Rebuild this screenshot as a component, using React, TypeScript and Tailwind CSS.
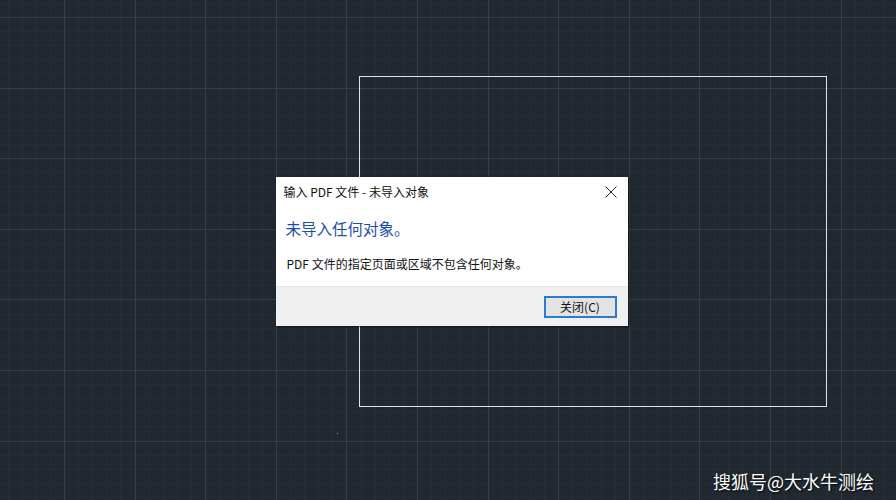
import React from "react";

const W = 896;
const H = 500;
const STEP = 70.6;
const OX = 64;
const OY = 17;

function gridLines(origin: number, size: number) {
    const major: number[] = [];
    const minor: number[] = [];
    const first = origin - Math.ceil(origin / STEP) * STEP;
    for (let m = first; m < size + STEP; m += STEP) {
        if (m >= 0 && m <= size) major.push(Math.round(m) + 0.5);
        for (let i = 1; i < 5; i++) {
            const v = m + (STEP / 5) * i;
            if (v >= 0 && v <= size) minor.push(Math.round(v) + 0.5);
        }
    }
    return { major, minor };
}

function CadCanvas() {
    const xs = gridLines(OX, W);
    const ys = gridLines(OY, H);
    return (
        <svg className="absolute inset-0" width={W} height={H} viewBox={`0 0 ${W} ${H}`}>
            <rect width={W} height={H} fill="#212830" />
            {xs.minor.map((x, i) => (
                <line key={`vx${i}`} x1={x} y1={0} x2={x} y2={H} stroke="#262d36" strokeWidth={1} />
            ))}
            {ys.minor.map((y, i) => (
                <line key={`hy${i}`} x1={0} y1={y} x2={W} y2={y} stroke="#262d36" strokeWidth={1} />
            ))}
            {xs.major.map((x, i) => (
                <line key={`VX${i}`} x1={x} y1={0} x2={x} y2={H} stroke="#353d47" strokeWidth={1} />
            ))}
            {ys.major.map((y, i) => (
                <line key={`HY${i}`} x1={0} y1={y} x2={W} y2={y} stroke="#353d47" strokeWidth={1} />
            ))}
            {/* selection window */}
            <rect x={359.5} y={76.5} width={467} height={330} fill="none" stroke="#dfe2e6" strokeWidth={1} />
            <rect x={337} y={433} width={1} height={1} fill="#9aa0a8" />
        </svg>
    );
}

function CloseIcon() {
    return (
        <svg width="12" height="12" viewBox="0 0 12 12">
            <path d="M0.5 0.5 L11.5 11.5 M11.5 0.5 L0.5 11.5" stroke="#222" strokeWidth="1" fill="none" />
        </svg>
    );
}

export default function App() {
    return (
        <div
            className="relative w-[896px] h-[500px] overflow-hidden bg-[#212830]"
            style={{ fontFamily: '"Microsoft YaHei", "Noto Sans CJK SC", "Noto Sans", sans-serif' }}
        >
            <CadCanvas />

            <div className="relative flex h-full items-center justify-center pl-[7px] pt-[3px]">
                <div className="flex w-[352px] flex-col bg-white shadow-[1px_1px_2px_rgba(0,0,0,0.5)]">
                    <div className="flex h-[31px] items-center justify-between pl-[8px] pr-[11px]">
                        <span className="text-[12px] leading-none text-[#111]">输入 PDF 文件 - 未导入对象</span>
                        <CloseIcon />
                    </div>
                    <div className="pl-[10px] pt-[13px] text-[15.5px] leading-none text-[#1c4eab]">未导入任何对象。</div>
                    <div className="pl-[11px] pt-[22px] text-[12px] leading-none text-[#111]">
                        PDF 文件的指定页面或区域不包含任何对象。
                    </div>
                    <div className="mt-[16px] flex h-[40px] items-center justify-end border-t border-[#e6e6e6] bg-[#f0f0f0] pr-[11px]">
                        <button className="flex h-[22px] w-[73px] items-center justify-center border-2 border-[#2a7bd6] bg-[#e3e3e3] text-[12px] leading-none text-[#111]">
                            关闭(C)
                        </button>
                    </div>
                </div>
            </div>

            <div className="absolute bottom-[10px] right-[22px] text-[18px] leading-none text-white [text-shadow:1px_1px_2px_rgba(0,0,0,0.9)]">
                搜狐号@大水牛测绘
            </div>
        </div>
    );
}
